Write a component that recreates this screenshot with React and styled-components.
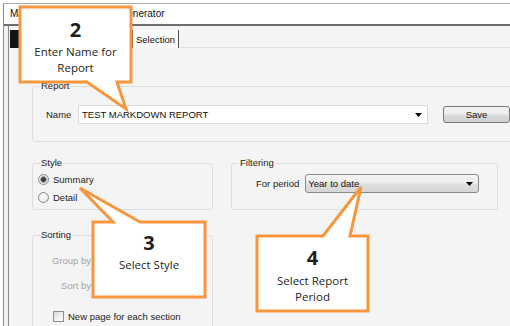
import React from 'react';
import styled, { createGlobalStyle, css } from 'styled-components';

const Global = createGlobalStyle`
  html, body { margin: 0; padding: 0; background: #fff; }
  body {
    width: 510px; height: 326px; overflow: hidden;
    font-family: "Liberation Sans", Arial, sans-serif;
  }
`;

const Window = styled.div`
  position: relative;
  width: 510px;
  height: 326px;
  overflow: hidden;
  background: #fff;
  padding: 3px 0 0 3px;
  box-sizing: border-box;
`;

const Frame = styled.div`
  height: 100%;
  display: flex;
  flex-direction: column;
  border-left: 1px solid #8c8c8c;
  border-top: 1px solid #b0b0b0;
  background: #f1f1f1;
`;

const TitleBar = styled.div`
  height: 20px;
  flex: none;
  background: #fff;
  border-bottom: 2px solid #6e6e6e;
  padding-left: 6px;
  font-size: 10px;
  line-height: 20px;
  color: #111;
`;

const Body = styled.div`
  flex: 1;
  margin-left: 4px;
  border-left: 1px solid #8c8c8c;
  background: #f4f4f4;
  display: flex;
  flex-direction: column;
  min-height: 0;
`;

const TabStrip = styled.div`
  height: 21px;
  flex: none;
  border-bottom: 1px solid #e2e2e2;
  display: flex;
  align-items: flex-end;
  padding-left: 1px;
`;

const Tab = styled.div`
  height: 18px;
  margin-bottom: -1px;
  box-sizing: border-box;
  font-size: 9.5px;
  line-height: 18px;
  padding: 1px 3px 0 3px;
  color: #111;
  white-space: nowrap;
  border-right: 1px solid #505050;
  ${p => p.$width && css`width: ${p.$width}px;`}
  ${p => p.$dark ? css`
    background: #141414;
    color: #141414;
  ` : css`
    background: #fbfbfb;
  `}
`;

const Content = styled.div`
  padding: 32px 0 0 23px;
  display: flex;
  flex-direction: column;
  font-size: 9.5px;
  color: #1c1c1c;
`;

const Group = styled.fieldset`
  margin: 0;
  padding: 0;
  min-width: 0;
  box-sizing: border-box;
  border: 1px solid #dddddd;
  border-radius: 3px;
  ${p => p.$width && css`width: ${p.$width}px;`}
  ${p => p.$bleed && css`margin-right: -24px;`}
`;

const Caption = styled.legend`
  margin-left: 7px;
  padding: 0 1px;
  font-size: 9.5px;
  line-height: 12px;
  color: #1c1c1c;
`;

const ReportBody = styled.div`
  display: flex;
  align-items: center;
  padding: 13px 0 17px 13px;
`;

const FieldLabel = styled.span`
  width: 32px;
  flex: none;
`;

const NameCombo = styled.div`
  width: 350px;
  height: 19px;
  box-sizing: border-box;
  background: #fff;
  border: 1px solid #dadada;
  display: flex;
  align-items: center;
  padding: 0 5px 0 3px;
  color: #111;
`;

const ComboText = styled.span`
  flex: 1;
  white-space: nowrap;
`;

const SaveButton = styled.div`
  margin-left: 15px;
  width: 67px;
  height: 17px;
  box-sizing: border-box;
  border: 1px solid #777;
  border-radius: 3px;
  background: linear-gradient(#f4f4f4 0%, #ececec 48%, #dcdcdc 52%, #d0d0d0 100%);
  display: flex;
  align-items: center;
  justify-content: center;
  color: #111;
`;

const Row = styled.div`
  display: flex;
  align-items: flex-start;
  gap: 18px;
  margin-top: ${p => p.$mt}px;
`;

const StyleBody = styled.div`
  padding: 1px 0 3px 5px;
  display: flex;
  flex-direction: column;
`;

const OptionRow = styled.label`
  height: 18px;
  display: flex;
  align-items: center;
  gap: 4px;
`;

const Radio = styled.span`
  width: 11px;
  height: 11px;
  flex: none;
  box-sizing: border-box;
  border-radius: 50%;
  border: 1px solid #8b8b8b;
  background: ${p => p.$checked
    ? 'radial-gradient(circle at 50% 50%, #2a2a2a 0, #4a4a4a 2px, #9a9a9a 3px, #e4e4e4 3.5px, #f7f7f7 100%)'
    : 'radial-gradient(circle at 40% 35%, #ffffff 0%, #ececec 60%, #d4d4d4 100%)'};
`;

const FilterBody = styled.div`
  padding: 5px 0 16px 24px;
  display: flex;
  align-items: center;
  gap: 6px;
`;

const PeriodCombo = styled.div`
  width: 174px;
  height: 19px;
  box-sizing: border-box;
  border: 1px solid #8a8a8a;
  border-radius: 3px;
  background: linear-gradient(#f5f5f5 0%, #ececec 48%, #dedede 52%, #d6d6d6 100%);
  display: flex;
  align-items: center;
  padding: 0 5px 0 2px;
  color: #111;
`;

const SortBody = styled.div`
  padding: 10px 0 30px 18px;
  display: flex;
  flex-direction: column;
  gap: 6px;
`;

const SortRow = styled.div`
  display: flex;
  align-items: center;
  gap: 4px;
  height: 19px;
`;

const DisabledLabel = styled.span`
  width: 40px;
  flex: none;
  white-space: nowrap;
  text-align: right;
  color: #a4a4a4;
`;

const DisabledCombo = styled.div`
  width: 108px;
  height: 19px;
  box-sizing: border-box;
  border: 1px solid #cfcfcf;
  border-radius: 2px;
  background: #f4f4f4;
`;

const CheckRow = styled.label`
  height: 20px;
  margin-top: 5px;
  margin-left: 2px;
  display: flex;
  align-items: center;
  gap: 4px;
  white-space: nowrap;
`;

const Check = styled.span`
  width: 11px;
  height: 11px;
  flex: none;
  box-sizing: border-box;
  border: 1px solid #8e8e8e;
  background: linear-gradient(135deg, #d8d8d8 0%, #f2f2f2 60%, #ffffff 100%);
`;

const Overlay = styled.svg`
  position: absolute;
  left: 0;
  top: 0;
  width: 510px;
  height: 326px;
  pointer-events: none;
`;

const Callout = styled.div`
  position: absolute;
  left: ${p => p.$x}px;
  top: ${p => p.$y}px;
  width: ${p => p.$w}px;
  height: ${p => p.$h}px;
  box-sizing: border-box;
  padding-top: ${p => p.$pt}px;
  display: flex;
  flex-direction: column;
  align-items: center;
  font-family: "Open Sans", "Noto Sans", sans-serif;
  color: #262626;
  text-align: center;
`;

const Step = styled.div`
  font-size: 20px;
  font-weight: 700;
  line-height: 22px;
  margin-bottom: ${p => p.$mb}px;
  color: #1e1e1e;
`;

const Note = styled.div`
  font-size: 11.5px;
  line-height: 16px;
`;

const Arrow = () => (
  <svg width="7" height="4" viewBox="0 0 7 4">
    <path d="M0 0H7L3.5 4Z" fill="#000" />
  </svg>
);

export default function App() {
  return (
    <>
      <Global />
      <Window>
        <Frame>
          <TitleBar>Markdown Sales Report Generator</TitleBar>
          <Body>
            <TabStrip>
              <Tab $dark $width={65}>Report</Tab>
              <Tab $width={58}>Layout</Tab>
              <Tab>Selection</Tab>
            </TabStrip>
            <Content>
              <Group $bleed>
                <Caption>Report</Caption>
                <ReportBody>
                  <FieldLabel>Name</FieldLabel>
                  <NameCombo>
                    <ComboText>TEST MARKDOWN REPORT</ComboText>
                    <Arrow />
                  </NameCombo>
                  <SaveButton>Save</SaveButton>
                </ReportBody>
              </Group>
              <Row $mt={15}>
                <Group $width={181}>
                  <Caption>Style</Caption>
                  <StyleBody>
                    <OptionRow><Radio $checked />Summary</OptionRow>
                    <OptionRow><Radio />Detail</OptionRow>
                  </StyleBody>
                </Group>
                <Group $width={267}>
                  <Caption>Filtering</Caption>
                  <FilterBody>
                    <span>For period</span>
                    <PeriodCombo>
                      <ComboText>Year to date</ComboText>
                      <Arrow />
                    </PeriodCombo>
                  </FilterBody>
                </Group>
              </Row>
              <Row $mt={19}>
                <Group $width={181}>
                  <Caption>Sorting</Caption>
                  <SortBody>
                    <SortRow><DisabledLabel>Group by</DisabledLabel><DisabledCombo /></SortRow>
                    <SortRow><DisabledLabel>Sort by</DisabledLabel><DisabledCombo /></SortRow>
                    <CheckRow><Check />New page for each section</CheckRow>
                  </SortBody>
                </Group>
              </Row>
            </Content>
          </Body>
        </Frame>

        <Overlay viewBox="0 0 510 326">
          <g fill="#fff" stroke="#f7963c" strokeWidth="3" strokeLinejoin="miter">
            <path d="M20 7H131V82H117L126 109L87 82H20Z" />
            <path d="M93 222H113L80 188L140 222H205V297H93Z" />
            <path d="M257 236H323L361 187L350 236H368V311H257Z" />
          </g>
        </Overlay>

        <Callout $x={20} $y={7} $w={111} $h={75} $pt={12}>
          <Step $mb={3}>2</Step>
          <Note>Enter Name for</Note>
          <Note>Report</Note>
        </Callout>
        <Callout $x={93} $y={222} $w={112} $h={75} $pt={10}>
          <Step $mb={3}>3</Step>
          <Note>Select Style</Note>
        </Callout>
        <Callout $x={257} $y={236} $w={111} $h={75} $pt={11}>
          <Step $mb={4}>4</Step>
          <Note>Select Report</Note>
          <Note>Period</Note>
        </Callout>
      </Window>
    </>
  );
}
